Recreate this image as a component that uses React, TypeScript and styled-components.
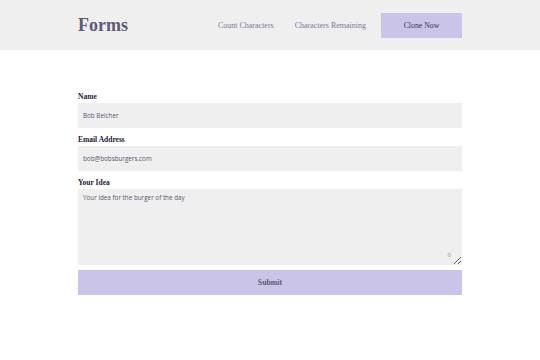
import React, { useState } from 'react'
import styled, { createGlobalStyle } from 'styled-components'

const GlobalStyle = createGlobalStyle`
  body {
    margin: 0;
    background: #fff;
    font-family: 'Liberation Serif', 'DejaVu Serif', serif;
  }
  * { box-sizing: border-box; }
`

export default function App() {
  const [name, setName] = useState('Bob Belcher')
  const [email, setEmail] = useState('bob@bobsburgers.com')
  const [idea, setIdea] = useState('')

  return (
    <>
      <GlobalStyle />
      <Header>
        <HeaderInner>
          <Title>Forms</Title>
          <Nav>
            <NavLink href='#'>Count Characters</NavLink>
            <NavLink href='#'>Characters Remaining</NavLink>
            <CloneButton>Clone Now</CloneButton>
          </Nav>
        </HeaderInner>
      </Header>
      <Main>
        <Form onSubmit={(e) => e.preventDefault()}>
          <Label htmlFor='name'>Name</Label>
          <Input id='name' value={name} onChange={(e) => setName(e.target.value)} />
          <Label htmlFor='email'>Email Address</Label>
          <Input id='email' value={email} onChange={(e) => setEmail(e.target.value)} />
          <Label htmlFor='idea'>Your Idea</Label>
          <AreaWrapper>
            <TextArea
              id='idea'
              value={idea}
              onChange={(e) => setIdea(e.target.value)}
              placeholder='Your idea for the burger of the day'
            />
            <Counter>{idea.length}</Counter>
          </AreaWrapper>
          <SubmitButton type='submit'>Submit</SubmitButton>
        </Form>
      </Main>
    </>
  )
}

const Header = styled.header`
  background: #efefef;
  height: 50px;
`

const HeaderInner = styled.div`
  width: 384px;
  margin: 0 auto;
  height: 100%;
  display: flex;
  align-items: center;
  justify-content: space-between;
`

const Title = styled.h1`
  margin: 0;
  font-size: 18px;
  font-weight: bold;
  color: #5f5a78;
`

const Nav = styled.nav`
  display: flex;
  align-items: center;
`

const NavLink = styled.a`
  font-size: 8px;
  color: #7c779b;
  text-decoration: none;
  margin-right: 21px;
  &:visited {
    color: #7c779b;
  }
  &:nth-child(2) {
    margin-right: 15px;
  }
`

const CloneButton = styled.button`
  width: 81px;
  height: 25px;
  border: 0;
  background: #cbc4e9;
  color: #3a3650;
  font-family: inherit;
  font-size: 7.8px;
  cursor: pointer;
`

const Main = styled.main`
  padding-top: 35px;
`

const Form = styled.form`
  width: 384px;
  margin: 0 auto;
  display: flex;
  flex-direction: column;
`

const Label = styled.label`
  margin-top: 5px;
  font-size: 7.5px;
  font-weight: bold;
  line-height: 13px;
  color: #24213a;
`

const fieldStyle = `
  border: 0;
  outline: 0;
  background: #efefef;
  font-family: 'Open Sans', 'Liberation Sans', sans-serif;
  font-size: 6.3px;
  color: #5a566f;
`

const Input = styled.input`
  ${fieldStyle}
  height: 25px;
  padding: 0 5px;
  width: 100%;
`

const AreaWrapper = styled.div`
  position: relative;
  height: 76px;
`

const TextArea = styled.textarea`
  ${fieldStyle}
  display: block;
  width: 100%;
  height: 76px;
  padding: 4px 5px;
  resize: vertical;
  &::placeholder {
    color: #5a566f;
    opacity: 1;
  }
`

const Counter = styled.span`
  position: absolute;
  right: 11px;
  bottom: 6px;
  font-family: 'Open Sans', 'Liberation Sans', sans-serif;
  font-size: 6px;
  color: #8a879a;
`

const SubmitButton = styled.button`
  margin-top: 5px;
  height: 25px;
  border: 0;
  background: #cbc4e9;
  color: #5a566f;
  font-family: 'Liberation Serif', 'DejaVu Serif', serif;
  font-size: 7.8px;
  font-weight: bold;
  cursor: pointer;
`
